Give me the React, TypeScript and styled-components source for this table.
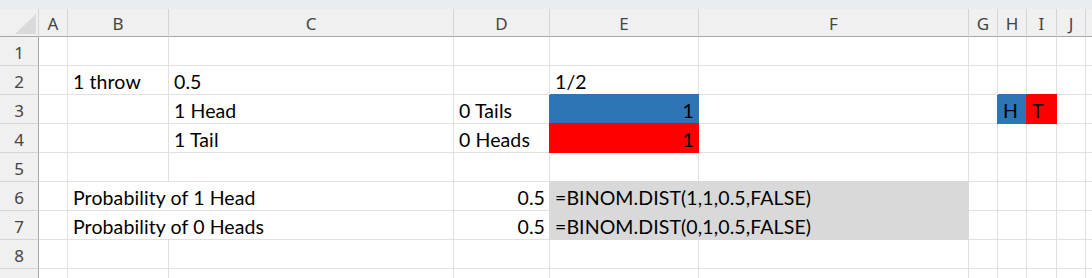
import React from 'react';
import styled, { createGlobalStyle } from 'styled-components';

const BLUE = '#2e75b6';
const RED = '#ff0000';
const GREY = '#d9d9d9';
const GRID = '#e1e1e1';

const GlobalStyle = createGlobalStyle`
  html, body {
    margin: 0;
    padding: 0;
    background: #ffffff;
    overflow: hidden;
  }
`;

type Align = 'left' | 'right';

interface CellSpec {
  text?: string;
  align?: Align;
  fill?: string;
  span?: number;
}

const COLUMNS = [
  { key: 'A', width: 29 },
  { key: 'B', width: 101 },
  { key: 'C', width: 285 },
  { key: 'D', width: 96 },
  { key: 'E', width: 149 },
  { key: 'F', width: 270 },
  { key: 'G', width: 29 },
  { key: 'H', width: 29 },
  { key: 'I', width: 30 },
  { key: 'J', width: 29 },
];

// rows 1-8 are numbered; the ninth only peeks in at the bottom edge
const ROW_COUNT = 9;
const NUMBERED_ROWS = 8;

const CELLS: Record<string, CellSpec> = {
  B2: { text: '1 throw' },
  C2: { text: '0.5' },
  E2: { text: '1/2' },
  C3: { text: '1 Head' },
  D3: { text: '0 Tails' },
  E3: { text: '1', align: 'right', fill: BLUE },
  H3: { text: 'H', fill: BLUE },
  I3: { text: 'T', fill: RED },
  C4: { text: '1 Tail' },
  D4: { text: '0 Heads' },
  E4: { text: '1', align: 'right', fill: RED },
  B6: { text: 'Probability of 1 Head', span: 2 },
  D6: { text: '0.5', align: 'right' },
  E6: { text: '=BINOM.DIST(1,1,0.5,FALSE)', fill: GREY, span: 2 },
  B7: { text: 'Probability of 0 Heads', span: 2 },
  D7: { text: '0.5', align: 'right' },
  E7: { text: '=BINOM.DIST(0,1,0.5,FALSE)', fill: GREY, span: 2 },
};

const Window = styled.div`
  width: 100vw;
  height: 100vh;
  display: flex;
  flex-direction: column;
  overflow: hidden;
`;

const TopStrip = styled.div`
  height: 9px;
  flex: none;
  background: #e6ecf0;
`;

const Sheet = styled.div`
  display: grid;
  grid-template-columns: 39px ${COLUMNS.map((c) => `${c.width}px`).join(' ')} 1fr;
  grid-template-rows: 28px repeat(${ROW_COUNT}, 29px);
`;

const Corner = styled.div`
  position: relative;
  background: #f0f0f0;
  border-right: 1px solid #d4d4d4;
  border-bottom: 1px solid #a6a6a6;
  box-sizing: border-box;

  svg {
    position: absolute;
    left: 15px;
    top: 5px;
  }
`;

const ColumnHeader = styled.div`
  display: flex;
  align-items: center;
  justify-content: center;
  padding-top: 1px;
  background: #f0f0f0;
  border-right: 1px solid #d4d4d4;
  border-bottom: 1px solid #a6a6a6;
  box-sizing: border-box;
  font-family: 'Noto Sans', 'Open Sans', sans-serif;
  font-size: 17px;
  color: #444444;
`;

const RowHeader = styled.div`
  display: flex;
  align-items: center;
  justify-content: center;
  padding-top: 2px;
  background: #f0f0f0;
  border-right: 1px solid #a6a6a6;
  border-bottom: 1px solid #d4d4d4;
  box-sizing: border-box;
  font-family: 'Noto Sans', 'Open Sans', sans-serif;
  font-size: 17px;
  color: #444444;
`;

const Cell = styled.div<{ $align: Align; $fill?: string; $span: number }>`
  grid-column: span ${(p) => p.$span};
  display: flex;
  align-items: center;
  justify-content: ${(p) => (p.$align === 'right' ? 'flex-end' : 'flex-start')};
  padding: 3px 4px 0 5px;
  box-sizing: border-box;
  border-right: 1px solid ${(p) => p.$fill ?? GRID};
  border-bottom: 1px solid ${(p) => p.$fill ?? GRID};
  background: ${(p) => p.$fill ?? 'transparent'};
  box-shadow: ${(p) => (p.$fill ? `0 -1px 0 ${p.$fill}, -1px 0 0 ${p.$fill}` : 'none')};
  font-family: Lato, 'Liberation Sans', sans-serif;
  font-size: 19.5px;
  letter-spacing: 0.1px;
  color: #000000;
  white-space: nowrap;
  overflow: visible;
`;

const CornerMark = () => (
  <svg width="21" height="20" viewBox="0 0 21 20">
    <polygon points="21,0 21,20 0,20" fill="#dadada" />
  </svg>
);

const renderRow = (row: number) => {
  const out: React.ReactNode[] = [
    <RowHeader key={`h${row}`}>{row <= NUMBERED_ROWS ? row : null}</RowHeader>,
  ];
  let skip = 0;
  COLUMNS.forEach((col) => {
    if (skip > 0) {
      skip -= 1;
      return;
    }
    const spec = CELLS[`${col.key}${row}`] ?? {};
    const span = spec.span ?? 1;
    skip = span - 1;
    out.push(
      <Cell key={`${col.key}${row}`} $align={spec.align ?? 'left'} $fill={spec.fill} $span={span}>
        {spec.text}
      </Cell>
    );
  });
  out.push(<Cell key={`K${row}`} $align="left" $span={1} />);
  return out;
};

const App: React.FC = () => {
  return (
    <>
      <GlobalStyle />
      <Window>
        <TopStrip />
        <Sheet>
          <Corner>
            <CornerMark />
          </Corner>
          {COLUMNS.map((c) => (
            <ColumnHeader key={c.key}>{c.key}</ColumnHeader>
          ))}
          <ColumnHeader />
          {Array.from({ length: ROW_COUNT }, (_, i) => renderRow(i + 1))}
        </Sheet>
      </Window>
    </>
  );
};

export default App;
